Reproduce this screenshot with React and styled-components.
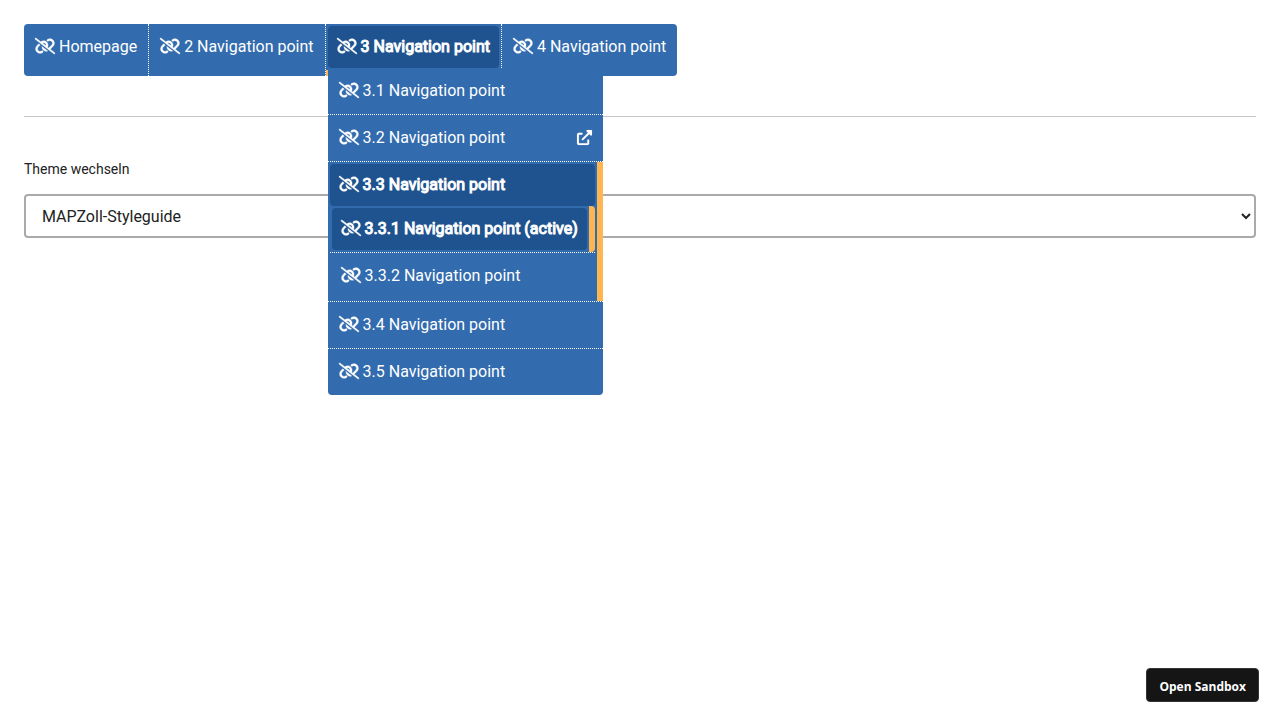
import React from 'react';
import styled, { createGlobalStyle, css } from 'styled-components';

const BLUE = '#326bae';
const DARK_BLUE = '#1f538f';
const ORANGE = '#ffb550';

const GlobalStyle = createGlobalStyle`
  *, *::before, *::after { box-sizing: border-box; }
  body {
    margin: 0;
    background: #fff;
    color: #222;
    font-family: Roboto, "Liberation Sans", sans-serif;
    font-size: 16px;
    line-height: 24px;
  }
`;

const Page = styled.main`
  min-height: 100vh;
  padding: 24px;
`;

const NavList = styled.ul`
  display: flex;
  width: fit-content;
  margin: 0;
  padding: 0;
  list-style: none;
  white-space: nowrap;
  background: ${BLUE};
  border-radius: 4px;
`;

const NavItem = styled.li`
  position: relative;
  padding: 2px;
  border-right: 1px dotted #fff;
  &:last-child { border-right: 0; }

  ${({ $active }) => $active && css`
    border-bottom: 6px solid ${ORANGE};
  `}
`;

const NavLink = styled.a`
  display: block;
  height: 42px;
  padding: 0 9px;
  border-radius: 4px;
  color: #fff;
  line-height: 42px;
  text-decoration: none;
  ${({ $active }) => $active && css`
    background: ${DARK_BLUE};
    -webkit-text-stroke: 1px #fff;
  `}
`;

const Icon = styled.svg`
  width: 20px;
  height: 16px;
  overflow: visible;
  fill: currentColor;
  stroke: currentColor;
  stroke-width: 12;
  vertical-align: -2px;
`;

const TrailingIcon = styled(Icon)`
  float: right;
  width: 15px;
  height: 15px;
  margin-top: 13px;
  stroke-width: 4;
`;

const Submenu = styled.ul`
  position: absolute;
  z-index: 1;
  top: 44px;
  left: 2px;
  margin: 0;
  padding: 0;
  list-style: none;
  background: ${BLUE};
  border-radius: 0 0 4px 4px;
`;

const NestedMenu = styled.ul`
  margin: 0;
  padding: 0;
  list-style: none;
`;

const MenuItem = styled.li`
  position: relative;
  padding: 2px;
  border-bottom: 1px dotted #fff;
  &:last-child { border-bottom: 0; }

  ${({ $active }) => $active && css`
    padding-right: 8px;
    &::after {
      content: '';
      position: absolute;
      top: 0;
      right: 0;
      bottom: 0;
      width: 6px;
      background: ${ORANGE};
      border-radius: ${({ $rounded }) => ($rounded ? '0 4px 4px 0' : '0')};
    }
  `}
`;

const Divider = styled.hr`
  margin: 40px 0;
  border: 0;
  border-top: 1px solid #c6c6c6;
`;

const Field = styled.div`
  display: flex;
  flex-direction: column;
  gap: 13px;
`;

const Label = styled.label`
  font-size: 14px;
`;

const Select = styled.select`
  width: 100%;
  height: 44px;
  padding: 0 1px 0 12px;
  border: 2px solid #aaa;
  border-radius: 4px;
  background: #fff;
  color: #222;
  font: inherit;
`;

const SandboxButton = styled.button`
  position: fixed;
  right: 21px;
  bottom: 18px;
  height: 34px;
  padding: 2px 12px 0;
  border: 1px solid #343434;
  border-radius: 4px;
  background: #151515;
  color: #fff;
  font-family: "Open Sans", "Noto Sans", sans-serif;
  font-size: 12px;
  font-weight: 700;
`;

function LinkSlash() {
  return (
    <Icon viewBox="0 0 640 512" aria-hidden="true">
      <path d="M185.7 120.3C242.5 75.82 324.7 79.73 376.1 131.1C420.1 175.1 430.9 239.6 406.7 293.5L438.6 318.4L534.5 222.5C566 191 566 139.1 534.5 108.5C506.7 80.63 462.7 76.1 430.7 99.9L429.1 101C414.7 111.3 394.7 107.1 384.5 93.58C374.2 79.2 377.5 59.21 391.9 48.94L393.5 47.82C451 6.732 529.8 13.25 579.8 63.24C636.3 119.7 636.3 211.3 579.8 267.7L489.3 358.2L630.8 469.1C641.2 477.3 643.1 492.4 634.9 502.8C626.7 513.2 611.6 515.1 601.2 506.9L9.196 42.89C-1.236 34.71-3.065 19.63 5.112 9.196C13.29-1.236 28.37-3.065 38.81 5.112L185.7 120.3zM238.1 161.1L353.4 251.7C359.3 225.5 351.7 197.2 331.7 177.2C306.6 152.1 269.1 147 238.1 161.1zM263 380C233.1 350.1 218.7 309.8 220.9 270L406.6 416.4C357.4 431 301.9 418.9 263 380zM116.6 187.9L167.2 227.8L105.5 289.5C73.99 320.1 73.99 372.9 105.5 404.4C133.3 432.3 177.3 435 209.3 412.1L210.9 410.1C225.3 400.7 245.3 404 255.5 418.4C265.8 432.8 262.5 452.8 248.1 463.1L246.5 464.2C188.1 505.3 110.2 498.7 60.21 448.8C3.741 392.3 3.741 300.7 60.21 244.3L116.6 187.9z" />
    </Icon>
  );
}

function ExternalLink() {
  return (
    <TrailingIcon viewBox="0 0 512 512" aria-hidden="true">
      <path d="M384 320c-17.67 0-32 14.33-32 32v96H64V160h96c17.67 0 32-14.32 32-32s-14.33-32-32-32L64 96c-35.35 0-64 28.65-64 64V448c0 35.34 28.65 64 64 64h288c35.35 0 64-28.66 64-64v-96C416 334.3 401.7 320 384 320zM488 0H352c-12.94 0-24.62 7.797-29.56 19.75c-4.969 11.97-2.219 25.72 6.938 34.88L370.8 96L169.4 297.4c-12.5 12.5-12.5 32.75 0 45.25C175.6 348.9 183.8 352 192 352s16.38-3.125 22.62-9.375L416 141.3l41.38 41.38c9.156 9.141 22.88 11.84 34.88 6.938C504.2 184.6 512 172.9 512 160V24C512 10.74 501.3 0 488 0z" />
    </TrailingIcon>
  );
}

function Entry({ children, active, external }) {
  return (
    <NavLink href="#" $active={active}>
      <LinkSlash /> {children}
      {external && <ExternalLink />}
    </NavLink>
  );
}

export default function App() {
  return (
    <Page>
      <GlobalStyle />
      <nav>
        <NavList>
          <NavItem><Entry>Homepage</Entry></NavItem>
          <NavItem><Entry>2 Navigation point</Entry></NavItem>
          <NavItem $active>
            <Entry active>3 Navigation point</Entry>
            <Submenu>
              <MenuItem><Entry>3.1 Navigation point</Entry></MenuItem>
              <MenuItem><Entry external>3.2 Navigation point</Entry></MenuItem>
              <MenuItem $active>
                <Entry active>3.3 Navigation point</Entry>
                <NestedMenu>
                  <MenuItem $active $rounded><Entry active>3.3.1 Navigation point (active)</Entry></MenuItem>
                  <MenuItem><Entry>3.3.2 Navigation point</Entry></MenuItem>
                </NestedMenu>
              </MenuItem>
              <MenuItem><Entry>3.4 Navigation point</Entry></MenuItem>
              <MenuItem><Entry>3.5 Navigation point</Entry></MenuItem>
            </Submenu>
          </NavItem>
          <NavItem><Entry>4 Navigation point</Entry></NavItem>
        </NavList>
      </nav>
      <Divider />
      <Field>
        <Label htmlFor="theme">Theme wechseln</Label>
        <Select id="theme" defaultValue="mapzoll">
          <option value="mapzoll">MAPZoll-Styleguide</option>
        </Select>
      </Field>
      <SandboxButton type="button">Open Sandbox</SandboxButton>
    </Page>
  );
}
